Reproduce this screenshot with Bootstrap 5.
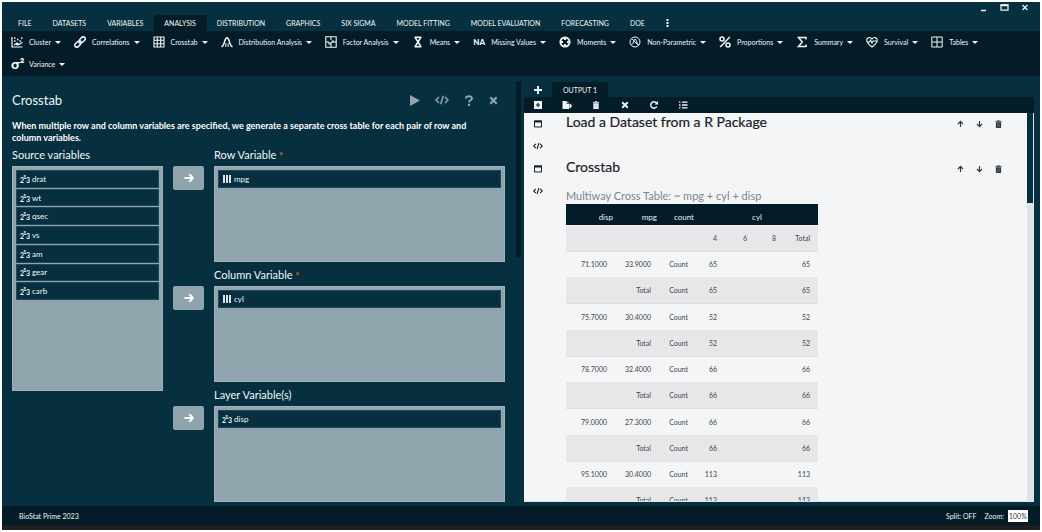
<!DOCTYPE html>
<html lang="en">
<head>
<meta charset="utf-8">
<meta name="viewport" content="width=device-width, initial-scale=1">
<title>BioStat Prime 2023</title>
<link href="https://cdn.jsdelivr.net/npm/bootstrap@5.3.0/dist/css/bootstrap.min.css" rel="stylesheet">
<style>
:root{--ink:#031c27;--base:#06303f;--fog:#90a4ad;--paper:#f4f5f7}
body{font-family:"Lato","Open Sans",sans-serif;font-size:9px;line-height:12px;color:#f1f5f6;background:#fff}
button{color:inherit}
svg{display:block;fill:none;stroke:currentColor;stroke-width:1.5}
.app{background:var(--base);border:2px solid #fff;overflow:hidden}
.plain{border:0;background:none;padding:0}
.winbar{top:2px;right:11px;gap:12px}
.menu{padding:13px 0 0 6px;font-size:7px;flex:none}
.menu button{height:16px;padding:0 11px 0 10px;border-radius:3px 3px 0 0;white-space:nowrap}
.menu .active{background:var(--ink)}
.ribbon{background:var(--ink);padding:0 9px 0 9px;font-size:7px;column-gap:13px;height:45px;flex:none}
.ribbon button{height:22px;gap:6px;white-space:nowrap}
.ribbon svg{width:12px;height:12px;flex:none}
.ribbon .dropdown-toggle::after{margin:0 0 0 -2px;border-top-width:3px;border-left-width:3px;border-right-width:3px}
.glyph{font-weight:900;font-size:8px;width:12px;text-align:center}
.glyph-lg{font-size:14px}
.split{width:50%}
.dialog-pane{padding:0 11px 0 10px}
.dialog-pane h1{font-size:13px;line-height:16px;margin:0;font-weight:400}
.actions{color:var(--fog);gap:15px;padding-right:7px}
.desc{font-size:9px;line-height:12px;font-weight:700;margin:12px 0 5px;padding-right:12px;color:#fff}
.form-grid{display:grid;grid-template-columns:minmax(0,13fr) 31px minmax(0,25fr);column-gap:10px;row-gap:7px}
.lab{font-size:11px;line-height:12px;height:17px;display:block}
.source{grid-row:1 / span 3}
.bin{background:var(--fog);border:1px solid #a1b2b9;padding:3px;margin:0;list-style:none}
.bin-long{height:225px}
.bin-short{height:96px}
.stack{display:grid;grid-auto-rows:1fr;row-gap:1px}
.stack-full{height:130px}
.chip{background:var(--base);border:1px solid #24495a;height:100%;min-height:18px;padding:0 3px;gap:2px;font-size:8px}
.stack .chip{min-height:0}
.chip svg{width:10px;height:10px}
.send{height:24px;width:31px;background:var(--fog);border-radius:2px;margin-top:17px;color:#fff}
.send svg{stroke-width:1.8}
.req{color:#ef5a32;font-size:9px;font-weight:700}
.rail{width:6px;margin-top:5px}
.rail i{display:block;height:176px;background:var(--ink)}
.out{padding:6px 6px 4px 3px}
.tabs{font-size:7px;flex:none}
.tabs button{height:15px}
.tab-add{width:28px}
.tab-on{background:var(--ink);border-radius:3px 3px 0 0;padding:0 11px}
.tools{background:var(--ink);height:16px;border-radius:3px 3px 0 0;padding-left:9px;gap:19px;flex:none}
.tools svg{width:10px;height:8px}
.paper{background:var(--paper);color:#1c2124;border-right:1px solid #dfe7ea;border-bottom:1px solid #dfe7ea;min-height:0}
.gut{width:42px;padding-left:9px;gap:14px}
.gut svg{width:10px;height:8px}
.entry{min-height:45px;padding-top:7px}
.entry h2{font-size:14px;line-height:16px;font-weight:400;margin:-6px 0 0;-webkit-text-stroke:.2px currentColor}
.entry h2.h2-gap{margin-bottom:14px}
.moves{gap:12px;padding-right:25px;color:#34393d}
.moves svg{width:7px;height:8px}
.cap{font-size:11px;line-height:14px;color:#7d868e;padding:0 0 1px}
.xtab{width:252px;height:310px;font-size:7px;line-height:10px;caption-side:top;table-layout:fixed;color:#41464a}
.xtab th,.xtab td{padding:0 8px 0 0;text-align:right;font-weight:400;vertical-align:middle}
.xtab thead tr:first-child{background:var(--ink);color:#e9eff1;height:21px;border-bottom:1px solid var(--paper)}
.xtab thead tr:first-child th{vertical-align:bottom;padding:0 2px 3px 0;font-size:8px}
.xtab thead tr:first-child .mid{text-align:center;padding-right:0}
.xtab thead tr:last-child,.xtab tbody tr:nth-child(even){background:#e7e7e9;border-bottom:1px solid #dedfe1}
.xtab .body-row,.xtab tbody tr{height:26px}
.bar2{width:6px;background:#e0e1e2}
.bar2 i{display:block;height:90px;background:var(--base)}
.status{background:var(--ink);height:19px;padding:0 12px 0 17px;font-size:7px;flex:none}
.status input{width:20px;height:12px;font-size:7px;border:0;padding:0 1px;background:#fff;color:#34393d}
.edge{height:5px;background:#1f1f21;flex:none}
</style>
</head>
<body>
<svg class="d-none" aria-hidden="true">
<symbol id="num" viewBox="0 0 10 10"><g fill="currentColor" stroke="none" font-family="Lato, sans-serif" font-weight="700"><text x="0" y="9" font-size="7">2</text><text x="3" y="5" font-size="6">1</text><text x="6" y="9" font-size="7">3</text></g></symbol>
<symbol id="bars" viewBox="0 0 10 10"><path d="M2 1v8M5 1v8M8 1v8" stroke-width="1.8"/></symbol>
<symbol id="arr" viewBox="0 0 10 10"><path d="M0.500 5h8.500M5.300 1.200 9 5 5.300 8.800"/></symbol>
<symbol id="code" viewBox="0 0 14 10"><path d="M4 2 1 5l3 3M10 2l3 3-3 3M8.300.8 5.700 9.200"/></symbol>
<symbol id="win" viewBox="0 0 10 8"><path d="M1.500 1h7v6h-7z" stroke-width="1"/><path d="M1 1.500h8" stroke-width="2"/></symbol>
<symbol id="up" viewBox="0 0 7 8"><path d="M3.500 7V1.500M1 4l2.500-2.600L6 4" stroke-width="1.200"/></symbol>
<symbol id="down" viewBox="0 0 7 8"><path d="M3.500 1v5.500M1 4l2.500 2.600L6 4" stroke-width="1.200"/></symbol>
<symbol id="trash" viewBox="0 0 8 9"><path d="M.5 1.500h7M3 .6h2" stroke-width="1"/><path d="M1 2.500h6V9H1z" fill="currentColor" stroke="none"/><path d="M3 4v3.500M5 4v3.500" stroke="#8d969b" stroke-width=".6"/></symbol>
<symbol id="x" viewBox="0 0 10 10"><path d="m1.500 1.500 7 7M8.500 1.500l-7 7" stroke-width="2.400"/></symbol>
</svg>
<div class="app vh-100 d-flex flex-column position-relative">
<div class="winbar position-absolute d-flex">
<button class="plain" aria-label="Minimize"><svg width="8" height="8"><path d="M1 6.500h5"/></svg></button>
<button class="plain" aria-label="Maximize"><svg width="9" height="8"><path d="M1 1.200h7v5H1z" stroke-width="1.200"/><path d="M.5 1.200h8" stroke-width="2"/></svg></button>
<button class="plain" aria-label="Close"><svg width="8" height="8"><path d="m1.500 1 5 5M6.500 1l-5 5" stroke-width="1.200"/></svg></button>
</div>
<nav class="menu d-flex" aria-label="Main menu">
<button class="plain">FILE</button><button class="plain">DATASETS</button><button class="plain">VARIABLES</button><button class="plain active">ANALYSIS</button><button class="plain">DISTRIBUTION</button><button class="plain">GRAPHICS</button><button class="plain">SIX SIGMA</button><button class="plain">MODEL FITTING</button><button class="plain">MODEL EVALUATION</button><button class="plain">FORECASTING</button><button class="plain">DOE</button><button class="plain" aria-label="More"><svg width="3" height="8" stroke-dasharray="2 1"><path d="M1.500 0v8" stroke-width="2"/></svg></button>
</nav>
<div class="ribbon d-flex flex-wrap align-content-start">
<button class="plain d-flex align-items-center dropdown-toggle"><svg viewBox="0 0 12 12"><path d="M1 1v10h10.500M3 9l3-2 2 1.500 3.500-2.300" stroke-width="1.200"/><path d="M3 2h1.500M3 5h1.500M6 3.500h1.500M8.500 5H10M10 2h1.500M5 8.500h3" stroke-width="1.500"/></svg>Cluster</button>
<button class="plain d-flex align-items-center dropdown-toggle"><svg viewBox="0 0 12 12"><g transform="rotate(-45 6 6)"><rect x="-.5" y="4" width="6.500" height="4" rx="2"/><rect x="6" y="4" width="6.500" height="4" rx="2"/><path d="M4 6h4"/></g></svg>Correlations</button>
<button class="plain d-flex align-items-center dropdown-toggle"><svg viewBox="0 0 12 12"><path d="M1 1h10v10H1zM4.300 1v10M7.700 1v10M1 4.300h10M1 7.700h10" stroke-width="1.100"/></svg>Crosstab</button>
<button class="plain d-flex align-items-center dropdown-toggle"><svg viewBox="0 0 12 12"><path d="M.5 10.800C3.800 10.300 3.300 1.700 6 1.700s2.200 8.600 5.500 9.100" stroke-width="1.500"/><path d="M4.800 11V7M7.200 11V7" stroke-width="1"/></svg>Distribution Analysis</button>
<button class="plain d-flex align-items-center dropdown-toggle"><svg viewBox="0 0 12 12"><path d="M.8.8h10.400v10.400H.8zM6 1v3M6 6v5M1 6h3M6 6h5M8 4v3M4 6v2h2" stroke-width="1.100"/></svg>Factor Analysis</button>
<button class="plain d-flex align-items-center dropdown-toggle"><svg viewBox="0 0 12 12"><path d="M2.500 1.300h7M2.500 10.700h7M3.200 1.500 8.800 10.500M8.800 1.500 3.200 10.500"/></svg>Means</button>
<button class="plain d-flex align-items-center dropdown-toggle"><span class="glyph">NA</span>Missing Values</button>
<button class="plain d-flex align-items-center dropdown-toggle"><svg viewBox="0 0 12 12"><circle cx="6" cy="6" r="4.600" stroke-width="2"/><path d="M6 1v3M6 8v3M1 6h3M8 6h3" stroke-width="2"/></svg>Moments</button>
<button class="plain d-flex align-items-center dropdown-toggle"><svg viewBox="0 0 12 12"><circle cx="6" cy="6" r="5" stroke-width="1"/><path d="m2.500 2.500 7 7M2.500 8.500C5 8 4.500 3 6 3s1.500 5 3.500 5.500" stroke-width="1"/></svg>Non-Parametric</button>
<button class="plain d-flex align-items-center dropdown-toggle"><svg viewBox="0 0 12 12"><circle cx="3" cy="3" r="2"/><circle cx="9" cy="9" r="2"/><path d="M10.800 1 1.200 11"/></svg>Proportions</button>
<button class="plain d-flex align-items-center dropdown-toggle"><svg viewBox="0 0 12 12"><path d="M10 3.500V1.500H2.500L6.300 6l-3.800 4.500H10v-2"/></svg>Summary</button>
<button class="plain d-flex align-items-center dropdown-toggle"><svg viewBox="0 0 12 12"><path d="M6 11C2 8 .7 6.200.7 4.200.7 1.300 4.500.6 6 3 7.500.6 11.300 1.300 11.300 4.200 11.300 6.200 10 8 6 11zM1 6h2.500l1-2 1.500 3 1-2h3.500" stroke-width="1.100"/></svg>Survival</button>
<button class="plain d-flex align-items-center dropdown-toggle"><svg viewBox="0 0 12 12"><path d="M.8 1h10.400v10H.8zM6 1v10M1 6h10" stroke-width="1"/></svg>Tables</button>
<button class="plain d-flex align-items-center dropdown-toggle"><span class="glyph glyph-lg">σ²</span>Variance</button>
</div>
<main class="d-flex flex-grow-1 overflow-hidden">
<section class="split d-flex overflow-hidden">
<div class="dialog-pane flex-grow-1">
<header class="d-flex justify-content-between align-items-center pt-3">
<h1>Crosstab</h1>
<div class="actions d-flex align-items-center">
<button class="plain" aria-label="Run"><svg width="10" height="11"><path d="M0 0v11l10-5.500z" fill="currentColor" stroke="none"/></svg></button>
<button class="plain" aria-label="Syntax"><svg width="14" height="10"><use href="#code"/></svg></button>
<button class="plain" aria-label="Help"><svg width="10" height="11"><path d="M2 3.500C2 .5 8 .5 8 3.300 8 5.200 5 5 5 7.300M5 8.700V11" stroke-width="2"/></svg></button>
<button class="plain" aria-label="Close dialog"><svg width="9" height="9"><use href="#x"/></svg></button>
</div>
</header>
<p class="desc">When multiple row and column variables are specified, we generate a separate cross table for each pair of row and column variables.</p>
<div class="form-grid">
<div class="source"><span class="lab">Source variables</span>
<div class="bin bin-long"><ul class="stack stack-full list-unstyled m-0">
<li><div class="chip d-flex align-items-center"><svg><use href="#num"/></svg>drat</div></li>
<li><div class="chip d-flex align-items-center"><svg><use href="#num"/></svg>wt</div></li>
<li><div class="chip d-flex align-items-center"><svg><use href="#num"/></svg>qsec</div></li>
<li><div class="chip d-flex align-items-center"><svg><use href="#num"/></svg>vs</div></li>
<li><div class="chip d-flex align-items-center"><svg><use href="#num"/></svg>am</div></li>
<li><div class="chip d-flex align-items-center"><svg><use href="#num"/></svg>gear</div></li>
<li><div class="chip d-flex align-items-center"><svg><use href="#num"/></svg>carb</div></li>
</ul></div></div>
<button class="plain send d-flex align-items-center justify-content-center" aria-label="Move to row"><svg width="10" height="10"><use href="#arr"/></svg></button>
<div><span class="lab">Row Variable <span class="req">*</span></span><ul class="bin bin-short"><li class="chip d-flex align-items-center h-auto"><svg><use href="#bars"/></svg>mpg</li></ul></div>
<button class="plain send d-flex align-items-center justify-content-center" aria-label="Move to column"><svg width="10" height="10"><use href="#arr"/></svg></button>
<div><span class="lab">Column Variable <span class="req">*</span></span><ul class="bin bin-short"><li class="chip d-flex align-items-center h-auto"><svg><use href="#bars"/></svg>cyl</li></ul></div>
<button class="plain send d-flex align-items-center justify-content-center" aria-label="Move to layer"><svg width="10" height="10"><use href="#arr"/></svg></button>
<div><span class="lab">Layer Variable(s)</span><ul class="bin bin-short"><li class="chip d-flex align-items-center h-auto"><svg><use href="#num"/></svg>disp</li></ul></div>
</div>
</div>
<div class="rail"><i></i></div>
</section>
<section class="out split d-flex flex-column">
<div class="tabs d-flex">
<button class="plain tab-add d-flex align-items-center justify-content-center" aria-label="New output"><svg width="8" height="8"><path d="M4 0v8M0 4h8" stroke-width="2"/></svg></button>
<button class="plain tab-on">OUTPUT 1</button>
</div>
<div class="tools d-flex align-items-center">
<button class="plain" aria-label="Add"><svg viewBox="0 0 10 8"><path d="M1 0h8v8H1z" fill="currentColor" stroke="none"/><path d="M5 2v4M3 4h4" stroke="#031c27" stroke-width="1.200"/></svg></button>
<button class="plain" aria-label="Export"><svg viewBox="0 0 10 8"><path d="M.5 0H5l2 2v6H.5z" fill="currentColor" stroke="none"/><path d="M4 5h5M7.500 3 9.500 5 7.500 7" stroke-width="1.200"/><path d="M5 0v2.500h2" stroke="#031c27" stroke-width=".7"/></svg></button>
<button class="plain" aria-label="Delete"><svg><use href="#trash"/></svg></button>
<button class="plain" aria-label="Clear"><svg><use href="#x"/></svg></button>
<button class="plain" aria-label="Refresh"><svg viewBox="0 0 10 8"><path d="M7.800 5.500A3.200 3.200 0 1 1 7.500 2"/><path d="M9 0v3.500H5.500z" fill="currentColor" stroke="none"/></svg></button>
<button class="plain" aria-label="Outline"><svg viewBox="0 0 10 8"><path d="M1 1.200h1.500M1 4h1.500M1 6.800h1.500M4 1.200h5.500M4 4h5.500M4 6.800h5.500" stroke-width="1.300"/></svg></button>
</div>
<div class="paper d-flex flex-grow-1 overflow-hidden">
<div class="flex-grow-1">
<article class="entry d-flex">
<div class="gut d-flex flex-column"><button class="plain" aria-label="Collapse"><svg><use href="#win"/></svg></button><button class="plain" aria-label="Code"><svg><use href="#code"/></svg></button></div>
<h2 class="flex-grow-1">Load a Dataset from a R Package</h2>
<div class="moves d-flex align-items-start"><button class="plain" aria-label="Move up"><svg><use href="#up"/></svg></button><button class="plain" aria-label="Move down"><svg><use href="#down"/></svg></button><button class="plain" aria-label="Delete entry"><svg><use href="#trash"/></svg></button></div>
</article>
<article class="entry d-flex">
<div class="gut d-flex flex-column"><button class="plain" aria-label="Collapse"><svg><use href="#win"/></svg></button><button class="plain" aria-label="Code"><svg><use href="#code"/></svg></button></div>
<div class="flex-grow-1"><h2 class="h2-gap">Crosstab</h2>
<table class="xtab">
<caption class="cap">Multiway Cross Table: ~ mpg + cyl + disp</caption>
<colgroup><col style="width:49px"><col style="width:44px"><col style="width:37px"><col style="width:29px"><col style="width:30px"><col style="width:29px"><col style="width:34px"></colgroup>
<thead><tr><th>disp</th><th>mpg</th><th>count</th><th colspan="4" class="mid">cyl</th></tr>
<tr class="body-row"><th></th><th></th><th></th><th>4</th><th>6</th><th>8</th><th>Total</th></tr></thead>
<tbody>
<tr><td>71.1000</td><td>33.9000</td><td>Count</td><td>65</td><td></td><td></td><td>65</td></tr>
<tr><td></td><td>Total</td><td>Count</td><td>65</td><td></td><td></td><td>65</td></tr>
<tr><td>75.7000</td><td>30.4000</td><td>Count</td><td>52</td><td></td><td></td><td>52</td></tr>
<tr><td></td><td>Total</td><td>Count</td><td>52</td><td></td><td></td><td>52</td></tr>
<tr><td>78.7000</td><td>32.4000</td><td>Count</td><td>66</td><td></td><td></td><td>66</td></tr>
<tr><td></td><td>Total</td><td>Count</td><td>66</td><td></td><td></td><td>66</td></tr>
<tr><td>79.0000</td><td>27.3000</td><td>Count</td><td>66</td><td></td><td></td><td>66</td></tr>
<tr><td></td><td>Total</td><td>Count</td><td>66</td><td></td><td></td><td>66</td></tr>
<tr><td>95.1000</td><td>30.4000</td><td>Count</td><td>113</td><td></td><td></td><td>113</td></tr>
<tr><td></td><td>Total</td><td>Count</td><td>113</td><td></td><td></td><td>113</td></tr>
</tbody></table></div>
<div class="moves d-flex align-items-start"><button class="plain" aria-label="Move up"><svg><use href="#up"/></svg></button><button class="plain" aria-label="Move down"><svg><use href="#down"/></svg></button><button class="plain" aria-label="Delete entry"><svg><use href="#trash"/></svg></button></div>
</article>
</div>
<div class="bar2"><i></i></div>
</div>
</section>
</main>
<footer class="status d-flex align-items-center">
<span class="me-auto">BioStat Prime 2023</span><span class="me-2">Split: OFF</span><label for="zoom" class="me-1">Zoom:</label><input id="zoom" type="text" value="100%">
</footer>
<div class="edge"></div>
</div>
<script src="https://cdn.jsdelivr.net/npm/bootstrap@5.3.0/dist/js/bootstrap.bundle.min.js"></script>
</body>
</html>
